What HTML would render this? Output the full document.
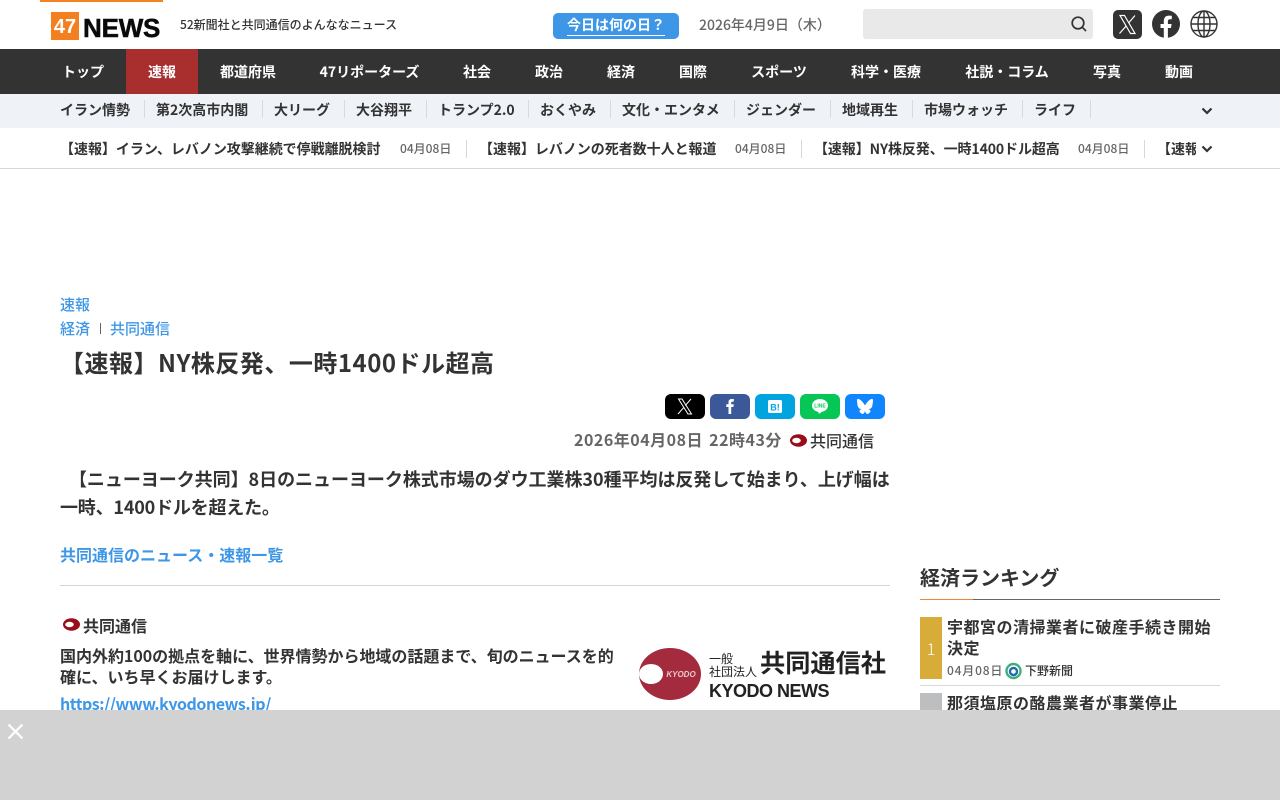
<!DOCTYPE html>
<html lang="ja"><head><meta charset="utf-8"><title>【速報】NY株反発、一時1400ドル超高</title>
<style>
*{box-sizing:border-box}
html,body{margin:0;padding:0;width:1280px;height:800px;overflow:hidden;background:#fff}
body{font-family:"Noto Sans CJK JP","Liberation Sans",sans-serif;color:#333;position:relative;font-weight:700}
.a{position:absolute;white-space:nowrap;line-height:1}
.c{transform:translateX(-50%)}
.n{color:#fff;font-size:14px;top:65px}
.s{font-size:14px;top:103px;color:#333}
.d{position:absolute;width:1px;background:#d8dadd;top:100px;height:18px}
.t{font-size:14px;top:142px;color:#333;letter-spacing:-.03px}
.td{font-size:12px;top:143px;color:#666;font-weight:500}
.d2{position:absolute;width:1px;background:#d8d8d8;top:140px;height:18px}
.b{position:absolute;top:394px;width:40px;height:25px;border-radius:6px}
.b svg{position:absolute;left:0;top:0}
.l{color:#3d97e6}
svg{display:block}
</style></head><body>
<div class="a" style="left:40px;top:0;width:123px;height:2px;background:#f58220"></div>
<div class="a" style="left:51px;top:12px;width:28px;height:28px;background:#f47f20"></div>
<div class="a" style="left:51px;top:16px;width:28px;text-align:center;color:#fff;font:700 20px 'Liberation Sans',sans-serif">47</div>
<div class="a" style="left:83px;top:13px;color:#0a0a0a;font:700 26px 'Liberation Sans',sans-serif;-webkit-text-stroke:.5px #0a0a0a;letter-spacing:-.2px">NEWS</div>
<div class="a" style="left:180px;top:19px;font-size:12px;font-weight:500">52新聞社と共同通信のよんななニュース</div>
<div class="a" style="left:553px;top:13px;width:126px;height:26px;background:#3d97e6;border-radius:5px"></div>
<div class="a" style="left:567px;top:18px;color:#fff;font-size:14px;border-bottom:1px solid #fff;padding-bottom:3px">今日は何の日？</div>
<div class="a" style="left:699px;top:18px;font-size:14px;color:#666;font-weight:500">2026年4月9日（木）</div>
<div class="a" style="left:863px;top:9px;width:230px;height:30px;background:#e9e9e9;border-radius:3px"></div>
<svg class="a" style="left:1070px;top:15px" width="18" height="18" viewBox="0 0 18 18" fill="none" stroke="#333" stroke-width="1.7"><circle cx="8" cy="8" r="5.8"/><path d="M12.2 12.2L16 16"/></svg>
<svg class="a" style="left:1113px;top:10px" width="29" height="29" viewBox="0 0 29 29"><rect width="29" height="29" rx="5" fill="#333"/><path d="M7 5.500h4.500l10.500 18h-4.500zM22 5.500L15.600 13M13 16.200L6.500 23.500" fill="none" stroke="#fff" stroke-width="1.200"/></svg>
<svg class="a" style="left:1152px;top:10px" width="28" height="28" viewBox="0 0 28 28"><circle cx="14" cy="14" r="14" fill="#333"/><path d="M11.800 28V18H8.500v-4h3.300v-3c0-3.500 2-5.400 5.100-5.400 1.500 0 2.900.2 2.900.2v3.400h-1.700c-1.700 0-2.200 1-2.200 2.100V14h3.700l-.6 4H15.900V28z" fill="#fff"/></svg>
<svg class="a" style="left:1190px;top:10px" width="28" height="28" viewBox="0 0 28 28" fill="none" stroke="#333" stroke-width="1.400"><circle cx="14" cy="14" r="13"/><ellipse cx="14" cy="14" rx="6" ry="13"/><path d="M14 1v26M1 14h26M3 7.500h22M3 20.500h22"/></svg>

<div class="a" style="left:0;top:49px;width:1280px;height:45px;background:#333"></div>
<div class="a" style="left:126px;top:49px;width:72px;height:45px;background:#a92f2f"></div>
<div class="a n c" style="left:83px">トップ</div>
<div class="a n c" style="left:162px">速報</div>
<div class="a n c" style="left:248px">都道府県</div>
<div class="a n c" style="left:369.500px">47リポーターズ</div>
<div class="a n c" style="left:477px">社会</div>
<div class="a n c" style="left:549px">政治</div>
<div class="a n c" style="left:621px">経済</div>
<div class="a n c" style="left:693px">国際</div>
<div class="a n c" style="left:779px">スポーツ</div>
<div class="a n c" style="left:886px">科学・医療</div>
<div class="a n c" style="left:1007px">社説・コラム</div>
<div class="a n c" style="left:1107px">写真</div>
<div class="a n c" style="left:1179px">動画</div>

<div class="a" style="left:0;top:94px;width:1280px;height:34px;background:#eff2f7"></div>
<div class="a s" style="left:60px">イラン情勢</div><div class="d" style="left:144px"></div>
<div class="a s" style="left:156px">第2次高市内閣</div><div class="d" style="left:262px"></div>
<div class="a s" style="left:274px">大リーグ</div><div class="d" style="left:344px"></div>
<div class="a s" style="left:356px">大谷翔平</div><div class="d" style="left:426px"></div>
<div class="a s" style="left:438px">トランプ2.0</div><div class="d" style="left:528px"></div>
<div class="a s" style="left:540px">おくやみ</div><div class="d" style="left:610px"></div>
<div class="a s" style="left:622px">文化・エンタメ</div><div class="d" style="left:734px"></div>
<div class="a s" style="left:746px">ジェンダー</div><div class="d" style="left:830px"></div>
<div class="a s" style="left:842px">地域再生</div><div class="d" style="left:912px"></div>
<div class="a s" style="left:924px">市場ウォッチ</div><div class="d" style="left:1022px"></div>
<div class="a s" style="left:1034px">ライフ</div><div class="d" style="left:1090px"></div>
<svg class="a" style="left:1201px;top:107px" width="12" height="8" viewBox="0 0 12 8" fill="none" stroke="#333" stroke-width="2.200"><path d="M1.500 1.500L6 6l4.500-4.500"/></svg>

<div class="a t" style="left:60px">【速報】イラン、レバノン攻撃継続で停戦離脱検討</div>
<div class="a td" style="left:400px">04月08日</div><div class="d2" style="left:466px"></div>
<div class="a t" style="left:479px">【速報】レバノンの死者数十人と報道</div>
<div class="a td" style="left:735px">04月08日</div><div class="d2" style="left:801px"></div>
<div class="a t" style="left:814px;letter-spacing:-.1px">【速報】NY株反発、一時1400ドル超高</div>
<div class="a td" style="left:1078px">04月08日</div><div class="d2" style="left:1144px"></div>
<div class="a t" style="left:1157px;width:39px;overflow:hidden">【速報】</div>
<svg class="a" style="left:1201px;top:145px" width="12" height="8" viewBox="0 0 12 8" fill="none" stroke="#333" stroke-width="2.200"><path d="M1.500 1.500L6 6l4.500-4.500"/></svg>
<div class="a" style="left:0;top:168px;width:1280px;height:1px;background:#d8d8d8"></div>

<div class="a l" style="left:60px;top:297px;font-size:15px;font-weight:500">速報</div>
<div class="a l" style="left:60px;top:321px;font-size:15px;font-weight:500">経済</div>
<div class="a" style="left:100px;top:323px;width:1px;height:11px;background:#666"></div>
<div class="a l" style="left:110px;top:321px;font-size:15px;font-weight:500">共同通信</div>
<div class="a" style="left:60px;top:350px;font-size:24px;letter-spacing:.5px">【速報】NY株反発、一時1400ドル超高</div>

<div class="b" style="left:665px;background:#000"><svg width="40" height="25" viewBox="0 0 40 25" fill="none" stroke="#fff" stroke-width="1"><path d="M13.500 5h3.500l9.500 15h-3.500zM26 5l-5.800 6.600M18.500 13.800L13 20"/></svg></div>
<div class="b" style="left:710px;background:#3b5998"><svg width="40" height="25" viewBox="0 0 40 25"><path d="M18.500 20v-7h-2.200v-2.800h2.200V8.300c0-2.300 1.300-3.300 3.300-3.300h2v2.600h-1.300c-1 0-1.300.5-1.300 1.200v1.400h2.600l-.4 2.800h-2.200v7z" fill="#fff"/></svg></div>
<div class="b" style="left:755px;background:#00a4de"><svg width="40" height="25" viewBox="0 0 40 25"><rect x="13" y="6" width="14" height="13" rx="1.500" fill="#fff"/><text x="20" y="16.500" text-anchor="middle" font-family="Liberation Sans" font-weight="700" font-size="9" fill="#00a4de">B!</text></svg></div>
<div class="b" style="left:800px;background:#06c755"><svg width="40" height="25" viewBox="0 0 40 25"><ellipse cx="20" cy="11.500" rx="8" ry="6.500" fill="#fff"/><path d="M18 17l1 3 4-3z" fill="#fff"/><text x="20" y="13.500" text-anchor="middle" font-family="Liberation Sans" font-weight="700" font-size="5" fill="#06c755">LINE</text></svg></div>
<div class="b" style="left:845px;background:#1185fe"><svg width="40" height="25" viewBox="0 0 40 25"><path d="M20 11.500c-1-2-3.700-5.500-6.200-6.500-1.500-.6-1.800.4-1.800 1.500 0 1 .5 4.800.9 6 .8 2.300 2.800 2.700 4.600 2.400-3 .5-3.800 2.200-2.100 3.900 3 3 4.300-.8 4.600-1.700.3.900 1.600 4.700 4.600 1.700 1.700-1.700.9-3.400-2.100-3.900 1.800.3 3.800-.1 4.600-2.400.4-1.200.9-5 .9-6 0-1.100-.3-2.100-1.800-1.500-2.500 1-5.200 4.500-6.200 6.500z" fill="#fff"/></svg></div>

<div class="a" style="left:574px;top:431px;font-size:16px;color:#666;letter-spacing:.5px;word-spacing:2px">2026年04月08日 22時43分</div>
<svg class="a" style="left:790px;top:434px" width="17" height="13" viewBox="0 0 17 13"><ellipse cx="8.500" cy="6.500" rx="8.500" ry="6.200" fill="#990d1a"/><ellipse cx="6.500" cy="6.500" rx="4.300" ry="2.700" fill="#fff"/></svg>
<div class="a" style="left:810px;top:432px;font-size:16px;font-weight:500">共同通信</div>

<div class="a" style="left:60px;top:464px;font-size:18px;line-height:30px;height:30px;letter-spacing:-.04px">&#12288;【ニューヨーク共同】8日のニューヨーク株式市場のダウ工業株30種平均は反発して始まり、上げ幅は</div>
<div class="a" style="left:60px;top:492px;font-size:18px;line-height:30px;height:30px;letter-spacing:-.2px">一時、1400ドルを超えた。</div>

<div class="a l" style="left:60px;top:546px;font-size:16px">共同通信のニュース・速報一覧</div>
<div class="a" style="left:60px;top:585px;width:830px;height:1px;background:#d5d5d5"></div>

<svg class="a" style="left:63px;top:618px" width="17" height="13" viewBox="0 0 17 13"><ellipse cx="8.500" cy="6.500" rx="8.500" ry="6.200" fill="#990d1a"/><ellipse cx="6.500" cy="6.500" rx="4.300" ry="2.700" fill="#fff"/></svg>
<div class="a" style="left:83px;top:617px;font-size:16px">共同通信</div>
<div class="a" style="left:60px;top:647px;font-size:16px;letter-spacing:-.02px">国内外約100の拠点を軸に、世界情勢から地域の話題まで、旬のニュースを的</div>
<div class="a" style="left:60px;top:668px;font-size:16px">確に、いち早くお届けします。</div>
<div class="a l" style="left:60px;top:695px;font-size:16px;letter-spacing:-.44px">https://www.kyodonews.jp/</div>

<svg class="a" style="left:639px;top:648px" width="62" height="52" viewBox="0 0 62 52"><ellipse cx="31" cy="26" rx="31" ry="26" fill="#a32b3d"/><ellipse cx="12" cy="26" rx="12" ry="10" fill="#fff"/><text x="42" y="29" text-anchor="middle" font-family="Liberation Sans" font-style="italic" font-weight="700" font-size="8" fill="#e8c8cc">KYODO</text></svg>
<div class="a" style="left:709px;top:652px;font-size:12px;line-height:13px;white-space:normal;width:50px;color:#222;font-weight:400">一般<br>社団法人</div>
<div class="a" style="left:760px;top:650px;font-size:25.200px;color:#222;font-weight:700">共同通信社</div>
<div class="a" style="left:709px;top:681px;font:700 18px 'Liberation Sans',sans-serif;color:#222;letter-spacing:-.5px">KYODO NEWS</div>

<div class="a" style="left:920px;top:567px;font-size:20px">経済ランキング</div>
<div class="a" style="left:920px;top:599px;width:300px;height:1px;background:#666"></div>
<div class="a" style="left:920px;top:599px;width:53px;height:1px;background:#f0853a"></div>
<div class="a" style="left:920px;top:617px;width:22px;height:62px;background:#d8ac38"></div>
<div class="a" style="left:920px;top:640px;width:22px;text-align:center;color:#fff;font-size:16px;font-weight:300">1</div>
<div class="a" style="left:947px;top:618px;font-size:16px;letter-spacing:.5px">宇都宮の清掃業者に破産手続き開始</div>
<div class="a" style="left:947px;top:639px;font-size:16px;letter-spacing:.5px">決定</div>
<div class="a" style="left:947px;top:665px;font-size:12px;color:#666;letter-spacing:.8px;font-weight:500">04月08日</div>
<svg class="a" style="left:1005px;top:662px" width="17" height="18" viewBox="0 0 17 18" fill="none"><circle cx="8.500" cy="9" r="7" stroke="#3fae7b" stroke-width="2.400"/><circle cx="8.500" cy="9.500" r="3.500" stroke="#1f6cae" stroke-width="2.400"/></svg>
<div class="a" style="left:1025px;top:665px;font-size:12px;font-weight:500">下野新聞</div>
<div class="a" style="left:920px;top:685px;width:300px;height:1px;background:#d8d8d8"></div>
<div class="a" style="left:920px;top:693px;width:22px;height:30px;background:#bdbec0"></div>
<div class="a" style="left:947px;top:694px;font-size:16px;letter-spacing:.5px">那須塩原の酪農業者が事業停止</div>

<div class="a" style="left:0;top:710px;width:1280px;height:90px;background:#d2d2d2"></div>
<svg class="a" style="left:7px;top:723px" width="17" height="17" viewBox="0 0 17 17" stroke="#fff" stroke-width="2.200"><path d="M1.500 1.500l14 14M15.500 1.500l-14 14"/></svg>
</body></html>
